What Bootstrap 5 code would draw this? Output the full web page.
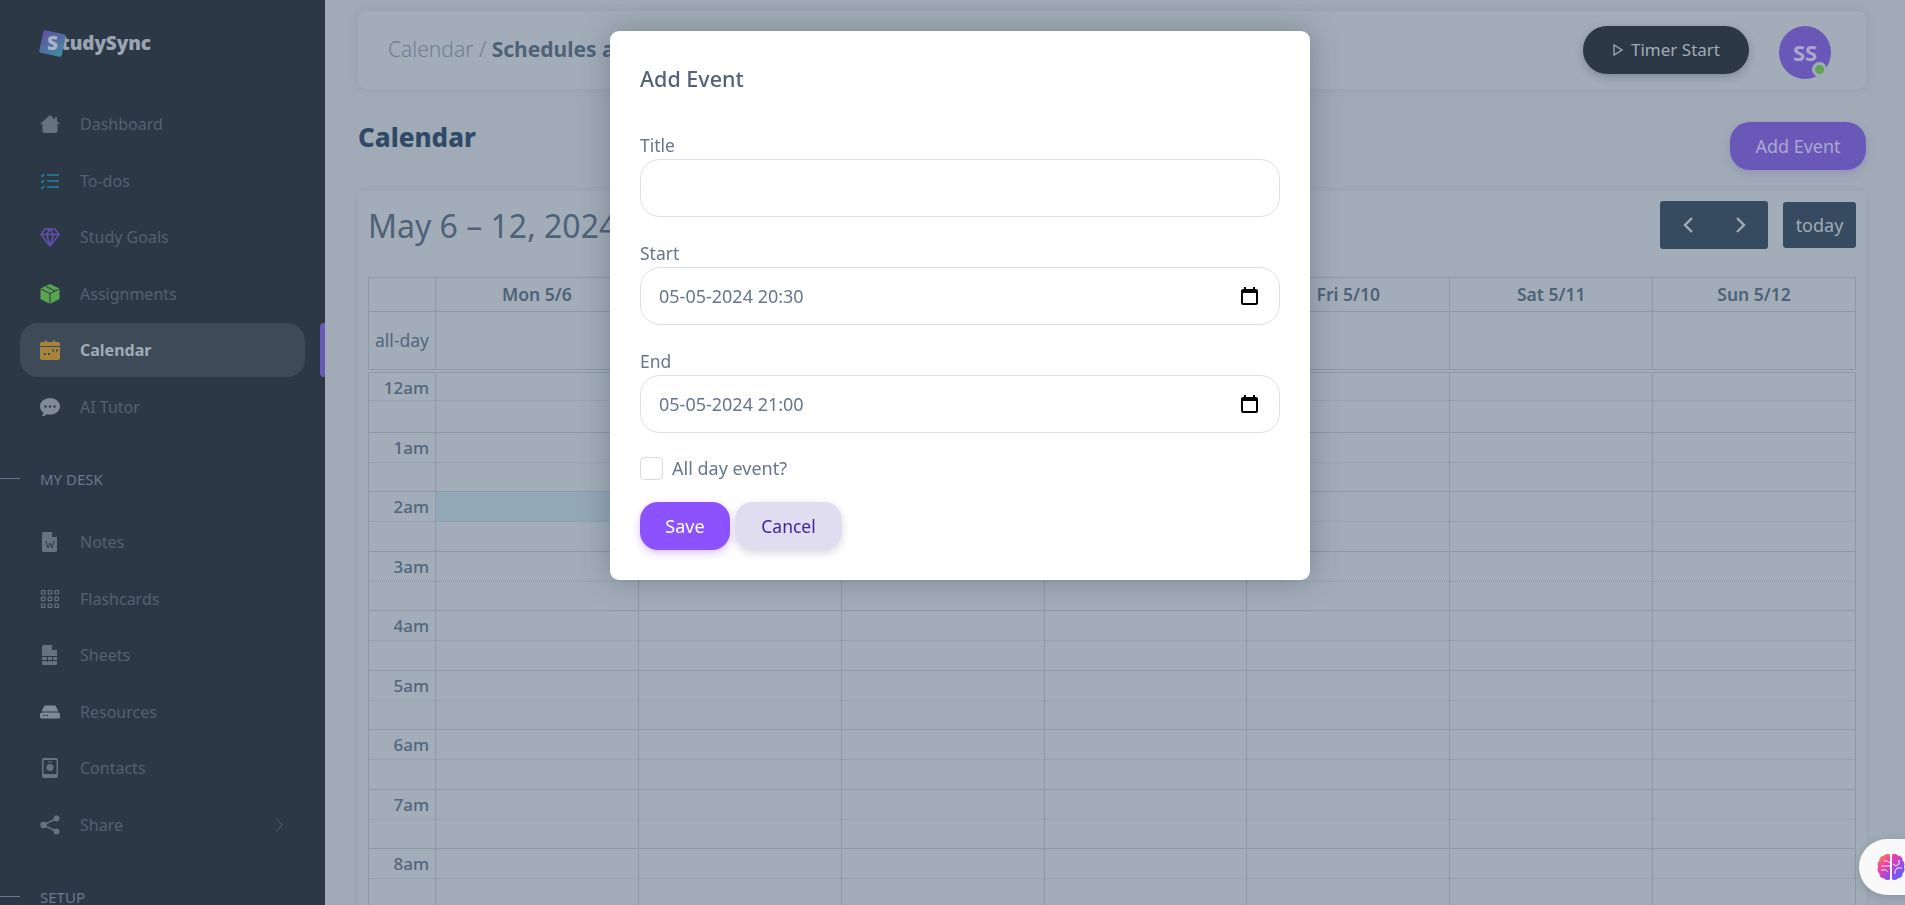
<!DOCTYPE html>
<html lang="en">
  <head>
    <title>StudySync calendar</title>
    <meta charset="utf-8" />
    <meta name="viewport" content="width=device-width, initial-scale=1" />
    <link href="https://cdn.jsdelivr.net/npm/bootstrap@5.3.3/dist/css/bootstrap.min.css" rel="stylesheet" />
    <script src="https://cdn.jsdelivr.net/npm/bootstrap@5.3.3/dist/js/bootstrap.bundle.min.js"></script>
    <style>
      html, body { height: 905px; overflow: hidden; }
      body { font-family: "Noto Sans", "Open Sans", sans-serif; background: #a0abb7; color: #4f6278; }
      .app-shell { height: 905px; overflow: hidden; }
      .side { width: 325px; flex: none; background: #2d3846; height: 905px; overflow: hidden; position: relative; }
      .side-logo { padding: 26px 0 0 41px; height: 97px; }
      .logo-word { font-family: "Open Sans", sans-serif; font-weight: 800; font-size: 19px; color: #9aa4b2; letter-spacing: -.1px; line-height: 34px; }
      .logo-s { display: inline-block; width: 23px; height: 23px; line-height: 23px; text-align: center; margin-right: -3px; transform: rotate(12deg); background: linear-gradient(135deg, #62509f, #3f8ea3); border-radius: 2px; color: #a9b3c4; }
      .logo-s span { display: inline-block; transform: rotate(-12deg); }
      .side-item { height: 54px; margin: 0 20px 2.6px; padding-left: 20px; gap: 20px; border-radius: 18px; font-size: 16px; color: #55606f; }
      .side-item svg { width: 20px; height: 20px; flex: none; }
      .side-item.on { background: #3e4a58; color: #a0abb7; font-weight: 700; position: relative; }
      .side-item.on::after { content: ""; position: absolute; right: -20px; top: 0; width: 5px; height: 54px; background: #6a58b8; border-radius: 4px 0 0 4px; }
      .side-head { height: 44px; margin-top: 23px; margin-bottom: 14px; padding-left: 40px; font-size: 15px; color: #6b778f; position: relative; }
      .side-head::before { content: ""; position: absolute; left: 0; top: 21px; width: 20px; height: 1px; background: #6b778f; }
      .main-col { padding: 11px 39px 0 33px; min-width: 0; }
      .top-strip { height: 78px; background: #a2adb9; border-radius: 8px; box-shadow: 0 0 10px rgba(45, 56, 70, .1); padding: 0 35px 0 30px; }
      .crumb { font-size: 21px; font-weight: 300; color: #6f8096; white-space: nowrap; }
      .crumb b { font-weight: 700; color: #4f6278; }
      .top-tools { align-self: flex-start; margin-top: 15px; }
      .btn-timer { width: 166px; height: 48px; border-radius: 24px; background: #2d3846; color: #a0abb7; font-size: 17px; gap: 7px; box-shadow: 0 3px 8px rgba(45, 56, 70, .3); }
      .btn-timer svg { width: 12px; height: 14px; }
      .user-ava { width: 52px; height: 53px; border-radius: 50%; background: #6a58b8; color: #aaa8d2; font-size: 22px; font-weight: 700; margin-left: 30px; position: relative; }
      .user-dot { position: absolute; right: 4px; bottom: 2px; width: 15px; height: 15px; border-radius: 50%; background: #5ca552; border: 3px solid #a0abb7; }
      .title-row { height: 102px; padding-top: 33px; }
      .page-name { font-size: 26px; font-weight: 800; color: #2f4a66; margin: -5px 0 0; line-height: 40px; }
      .btn-add { width: 136px; height: 48px; border-radius: 20px; background: #6a58b8; color: #aaa8d2; font-size: 18px; box-shadow: 0 3px 8px rgba(106, 88, 184, .3); }
      .cal-panel { background: #a2adb9; border-radius: 8px 8px 0 0; padding: 10px; box-shadow: 0 0 6px rgba(45, 56, 70, .06); height: 760px; }
      .cal-head { height: 76px; }
      .cal-title { font-size: 32px; font-weight: 400; color: #4f6278; margin: 0; line-height: 50px; }
      .fc-pair { width: 108px; height: 48px; background: #374b60; border-radius: 3px; color: #a0abb7; gap: 39px; }
      .fc-pair svg { width: 14px; height: 20px; }
      .fc-today { width: 73px; height: 46px; background: #374b60; border-radius: 3px; color: #a0abb7; font-size: 18px; margin-left: 15px; }
      .week-grid { width: 100%; border-collapse: collapse; table-layout: fixed; font-size: 17px; color: #4f6278; }
      .week-grid th, .week-grid td { border: 1px solid #8d99a6; padding: 0; }
      .week-grid th { height: 34px; text-align: center; font-weight: 600; font-size: 17.500px; }
      .week-grid .allday td { height: 59px; border-bottom: 4px double #8d99a6; }
      .week-grid .col-time { width: 67px; }
      .week-grid .lbl { text-align: right; padding-right: 6px; font-size: 17px; line-height: 1; vertical-align: top; padding-top: 6px; color: #52667d; }
      .week-grid .allday .lbl { text-align: center; padding: 0; vertical-align: middle; font-size: 17.500px; }
      .week-grid tr.h1 td { height: 30px; border-bottom: 1px dotted #8d99a6; }
      .week-grid tr.h2 td { height: 29.500px; border-top: 0; }
      .week-grid .allday + .h1 + .h2 td { height: 31.500px; }
      .week-grid .picked { background: #93a8b7; }
      .modal .add-box { width: 700px; max-width: none; margin: 31px 0 0 610px; }
      .add-box .modal-content { border: 0; border-radius: 9px; height: 549px; padding: 30px; box-shadow: 0 0 30px rgba(45, 56, 70, .35); display: block; }
      .add-title { font-size: 21.500px; font-weight: 500; color: #52627a; line-height: 36px; margin: 0 0 36px; }
      .field { margin-bottom: 24px; }
      .field label { display: block; font-size: 17.500px; color: #67768c; line-height: 24px; margin-bottom: 2px; }
      .field input { height: 58px; border: 1px solid #dcdfe5; border-radius: 20px; padding: 0 18px; font-size: 18px; color: #67768c; box-shadow: none; }
      .pick-icon { position: absolute; right: 22px; top: 50%; width: 17px; height: 18px; margin-top: -9px; }
      .all-day { height: 24px; margin-top: -1px; gap: 9px; font-size: 18px; color: #67768c; }
      .all-day input { width: 23px; height: 23px; margin: 0; border: 1px solid #d6d9df; border-radius: 5px; }
      .add-actions { margin-top: 22px; gap: 5px; }
      .btn-save { width: 90px; height: 48px; border-radius: 18px; background: #8b52fe; color: #fff; font-size: 18px; box-shadow: 0 3px 8px rgba(139, 82, 254, .35); }
      .btn-cancel { width: 107px; height: 48px; border-radius: 18px; background: #e1ddf0; color: #44219c; font-size: 17.500px; box-shadow: 0 3px 8px rgba(60, 60, 90, .2); }
      .help-pill { position: fixed; left: 1859px; top: 839px; width: 90px; height: 56px; border-radius: 28px; background: #f9f9fa; box-shadow: 0 2px 10px rgba(45, 56, 70, .2); z-index: 1060; padding: 14px 0 0 18px; }
      .help-pill svg { width: 28px; height: 28px; display: block; }
    </style>
  </head>
  <body>
    <div class="app-shell d-flex">
      <aside class="side">
        <div class="side-logo"><div class="logo-word"><span class="logo-s"><span>S</span></span>tudySync</div></div>
        <div>
          <div class="side-item d-flex align-items-center"><svg viewBox="0 0 20 20"><path fill="#67727f" d="M10 1 0 10h2.500v7a2 2 0 0 0 2 2h11a2 2 0 0 0 2-2v-7H20l-3-2.700V3h-2v2.500z"/></svg>Dashboard</div>
          <div class="side-item d-flex align-items-center"><svg viewBox="0 0 20 20" fill="none" stroke="#23819f" stroke-width="1.600"><path d="M7 4h12M7 10h12M7 16h12"/><path stroke-width="1.300" d="m1 4.500 1.200 1 2-2.500M1 10.500l1.200 1 2-2.500M1 16.500l1.200 1 2-2.500"/></svg>To-dos</div>
          <div class="side-item d-flex align-items-center"><svg viewBox="0 0 20 20" fill="none" stroke="#6350ae" stroke-width="1.500"><path d="M5 2h10l4 5.500L10 19 1 7.500zM1 7.500h18M6.500 7.500 10 19l3.500-11.500L10 2z"/></svg>Study Goals</div>
          <div class="side-item d-flex align-items-center"><svg viewBox="0 0 20 20"><path fill="#5aa350" d="M10 0 19.500 4.500v10.500L10 20 .5 15V4.500z"/><path fill="none" stroke="#2d3846" stroke-width="1" d="M.5 5 10 9.500 19.500 5M10 9.500V20M6 2.500l9 4.500"/></svg>Assignments</div>
          <div class="side-item on d-flex align-items-center"><svg viewBox="0 0 20 20"><path fill="#a8833c" d="M2 2h3V.5h2V2h6V.5h2V2h3a2 2 0 0 1 2 2v14a2 2 0 0 1-2 2H2a2 2 0 0 1-2-2V4a2 2 0 0 1 2-2z"/><path fill="#3e4a58" d="M0 6h20v1H0zM4 13h2v2H4zM8 13h2v2H8zM12 9.500h2v2h-2zM16 9.500h2v2h-2z"/></svg>Calendar</div>
          <div class="side-item d-flex align-items-center"><svg viewBox="0 0 20 20"><path fill="#818b98" d="M10 1c5.500 0 10 3.700 10 8.300s-4.500 8.300-10 8.300c-1 0-2-.1-3-.4C5.800 18.500 3.500 19.300 1.500 19c1-.8 1.800-2 2-3.300C1.300 14.200 0 11.900 0 9.300 0 4.700 4.500 1 10 1z"/><circle cx="5.500" cy="9.500" r="1.200" fill="#2d3846"/><circle cx="10" cy="9.500" r="1.200" fill="#2d3846"/><circle cx="14.500" cy="9.500" r="1.200" fill="#2d3846"/></svg>AI Tutor</div>
        </div>
        <div class="side-head d-flex align-items-center">MY DESK</div>
        <div>
          <div class="side-item d-flex align-items-center"><svg viewBox="0 0 20 20"><path fill="#67727f" d="M3.500 0H12l5 5v13.500a1.500 1.500 0 0 1-1.500 1.500h-12A1.500 1.500 0 0 1 2 18.500v-17A1.500 1.500 0 0 1 3.500 0z"/><path fill="#2d3846" d="M12 0v5h5z"/><path fill="none" stroke="#2d3846" stroke-width="1" d="m6 9 2 7 2-5 2 5 2-7"/></svg>Notes</div>
          <div class="side-item d-flex align-items-center"><svg viewBox="0 0 20 20" fill="none" stroke="#67727f" stroke-width="1.200"><rect x="1.500" y="1.500" width="3.500" height="3.500" rx=".6"/><rect x="8.200" y="1.500" width="3.500" height="3.500" rx=".6"/><rect x="15" y="1.500" width="3.500" height="3.500" rx=".6"/><rect x="1.500" y="8.200" width="3.500" height="3.500" rx=".6"/><rect x="8.200" y="8.200" width="3.500" height="3.500" rx=".6"/><rect x="15" y="8.200" width="3.500" height="3.500" rx=".6"/><rect x="1.500" y="15" width="3.500" height="3.500" rx=".6"/><rect x="8.200" y="15" width="3.500" height="3.500" rx=".6"/><rect x="15" y="15" width="3.500" height="3.500" rx=".6"/></svg>Flashcards</div>
          <div class="side-item d-flex align-items-center"><svg viewBox="0 0 20 20"><path fill="#67727f" d="M3.500 0H12l5 5v13.500a1.500 1.500 0 0 1-1.500 1.500h-12A1.500 1.500 0 0 1 2 18.500v-17A1.500 1.500 0 0 1 3.500 0z"/><path fill="#2d3846" d="M12 0v5h5zM2 11h15v1H2zM2 15h15v1H2zM7 11h1v6H7zM12 11h1v6h-1z"/></svg>Sheets</div>
          <div class="side-item d-flex align-items-center"><svg viewBox="0 0 20 20"><path fill="#818b98" d="M4.500 3.500h11l3 6h-17z"/><path fill="#818b98" d="M2 10.500h16a2 2 0 0 1 2 2V15a1.500 1.500 0 0 1-1.500 1.500h-17A1.500 1.500 0 0 1 0 15v-2.500a2 2 0 0 1 2-2z"/><path fill="#2d3846" d="M3 13h2v1H3zM6 13h2v1H6z"/></svg>Resources</div>
          <div class="side-item d-flex align-items-center"><svg viewBox="0 0 20 20"><path fill="#67727f" d="M4 0h12a2 2 0 0 1 2 2v16a2 2 0 0 1-2 2H4a2 2 0 0 1-2-2V2a2 2 0 0 1 2-2z"/><rect x="3.500" y="2" width="13" height="14" rx="1" fill="#2d3846"/><circle cx="10" cy="9.500" r="3.500" fill="#67727f"/><path fill="#67727f" d="M8 3.500h4v1H8z"/></svg>Contacts</div>
          <div class="side-item d-flex align-items-center"><svg viewBox="0 0 20 20"><path fill="none" stroke="#67727f" stroke-width="1.500" d="M16.500 3.500 3.500 10l13 6.500"/><circle cx="16.500" cy="3.500" r="3" fill="#67727f"/><circle cx="3.500" cy="10" r="3.200" fill="#67727f"/><circle cx="16.500" cy="16.500" r="3" fill="#67727f"/></svg><span class="flex-grow-1">Share</span><svg class="me-3" viewBox="0 0 20 20" fill="none" stroke="#55606f" stroke-width="1"><path d="m7 3 6 7-6 7"/></svg></div>
        </div>
        <div class="side-head d-flex align-items-center">SETUP</div>
      </aside>

      <main class="main-col flex-grow-1">
        <div class="top-strip d-flex align-items-center justify-content-between">
          <div class="crumb">Calendar / <b>Schedules and Events</b></div>
          <div class="top-tools d-flex">
            <button class="btn btn-timer d-flex align-items-center justify-content-center p-0" type="button"><svg viewBox="0 0 12 14" fill="none" stroke="currentColor" stroke-width="1.300"><path d="M2 2v10l8-5z"/></svg>Timer Start</button>
            <div class="user-ava d-flex align-items-center justify-content-center">SS<span class="user-dot"></span></div>
          </div>
        </div>
        <div class="title-row d-flex align-items-start justify-content-between">
          <h2 class="page-name">Calendar</h2>
          <button class="btn btn-add p-0" type="button">Add Event</button>
        </div>
        <div class="cal-panel">
          <div class="cal-head d-flex justify-content-between align-items-start">
            <h2 class="cal-title">May 6 – 12, 2024</h2>
            <div class="d-flex align-items-center">
              <div class="fc-pair d-flex align-items-center justify-content-center">
                <svg viewBox="0 0 14 20" fill="none" stroke="currentColor" stroke-width="2.400"><path d="M11 3 4 10l7 7"/></svg>
                <svg viewBox="0 0 14 20" fill="none" stroke="currentColor" stroke-width="2.400"><path d="m3 3 7 7-7 7"/></svg>
              </div>
              <div class="fc-today d-flex align-items-center justify-content-center">today</div>
            </div>
          </div>
          <table class="week-grid">
            <thead>
              <tr><th class="col-time"></th><th>Mon 5/6</th><th>Tue 5/7</th><th>Wed 5/8</th><th>Thu 5/9</th><th>Fri 5/10</th><th>Sat 5/11</th><th>Sun 5/12</th></tr>
            </thead>
            <tbody id="weekBody">
              <tr class="allday"><td class="lbl">all-day</td><td></td><td></td><td></td><td></td><td></td><td></td><td></td></tr>
            </tbody>
          </table>
        </div>
      </main>
    </div>

    <div class="modal d-block" tabindex="-1">
      <div class="modal-dialog add-box">
        <div class="modal-content">
          <h5 class="add-title">Add Event</h5>
          <form>
            <div class="field"><label for="evTitle">Title</label><input class="form-control" id="evTitle" type="text" /></div>
            <div class="field"><label for="evStart">Start</label>
              <div class="position-relative"><input class="form-control" id="evStart" type="text" value="05-05-2024 20:30" />
                <svg class="pick-icon" viewBox="0 0 17 18"><path fill="#000" d="M3 0h2v2h7V0h2v2h1a2 2 0 0 1 2 2v12a2 2 0 0 1-2 2H2a2 2 0 0 1-2-2V4a2 2 0 0 1 2-2h1zM2 6v10h13V6z"/></svg></div></div>
            <div class="field"><label for="evEnd">End</label>
              <div class="position-relative"><input class="form-control" id="evEnd" type="text" value="05-05-2024 21:00" />
                <svg class="pick-icon" viewBox="0 0 17 18"><path fill="#000" d="M3 0h2v2h7V0h2v2h1a2 2 0 0 1 2 2v12a2 2 0 0 1-2 2H2a2 2 0 0 1-2-2V4a2 2 0 0 1 2-2h1zM2 6v10h13V6z"/></svg></div></div>
            <div class="all-day d-flex align-items-center"><input class="form-check-input" id="evAll" type="checkbox" /><label for="evAll">All day event?</label></div>
            <div class="add-actions d-flex">
              <button class="btn btn-save p-0" type="button">Save</button>
              <button class="btn btn-cancel p-0" type="button">Cancel</button>
            </div>
          </form>
        </div>
      </div>
    </div>

    <div class="help-pill">
      <svg viewBox="0 0 28 28">
        <defs><linearGradient id="brainFill" x1="0" y1="0" x2="1" y2="1"><stop offset="0" stop-color="#f59a3a"/><stop offset=".35" stop-color="#ee3fa8"/><stop offset=".7" stop-color="#8b4cf0"/><stop offset="1" stop-color="#3f7df0"/></linearGradient></defs>
        <path fill="url(#brainFill)" d="M13 1.500v25c-2 .8-5 .5-6.500-1.500C4 25 2 23 2.500 20.500.5 19 0 16 1 14c-1-2-.5-5 1.500-6.500C2 5 4 3 6.500 3 8 1 11 .7 13 1.500zM15 1.500C17 .7 20 1 21.500 3 24 3 26 5 25.500 7.500 27.500 9 28 12 27 14c1 2 .5 5-1.500 6.500C26 23 24 25 21.500 25 20 27 17 27.300 15 26.500z"/>
        <path fill="none" stroke="#fff" stroke-width=".9" d="M4 13h9M4 17h5l2 2M7 8h3l3 2M22 7v4l-3 2-3-2M25 15h-5l-2 3v3"/>
      </svg>
    </div>

    <script>
      var body = document.getElementById("weekBody");
      var hours = ["12am", "1am", "2am", "3am", "4am", "5am", "6am", "7am", "8am", "9am"];
      hours.forEach(function (h) {
        var top = '<tr class="h1"><td class="lbl">' + h + "</td>";
        var bottom = '<tr class="h2"><td></td>';
        for (var i = 0; i < 7; i++) {
          top += h == "2am" && i == 0 ? '<td class="picked"></td>' : "<td></td>";
          bottom += "<td></td>";
        }
        body.insertAdjacentHTML("beforeend", top + "</tr>" + bottom + "</tr>");
      });
    </script>
  </body>
</html>
